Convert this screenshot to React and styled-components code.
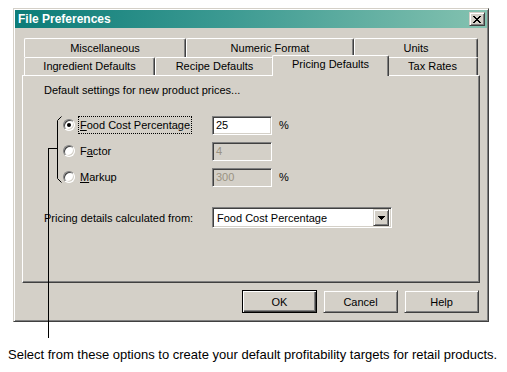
import React from 'react';
import styled, { createGlobalStyle, css } from 'styled-components';

const GlobalStyle = createGlobalStyle`
  body {
    margin: 0;
    background: #ffffff;
    font-family: "Liberation Sans", Arial, sans-serif;
    font-size: 11px;
    color: #000;
  }
`;

const face = '#d4d0c8';
const shadow = '#808080';
const darkShadow = '#404040';

// raised 3d edge, classic windows look
const raised = css`
  border: 1px solid;
  border-color: ${face} ${darkShadow} ${darkShadow} ${face};
  box-shadow: inset 1px 1px #ffffff, inset -1px -1px ${shadow};
`;

const sunken = css`
  border: 1px solid;
  border-color: ${shadow} #ffffff #ffffff ${shadow};
  box-shadow: inset 1px 1px ${darkShadow}, inset -1px -1px ${face};
`;

const Page = styled.div`
  position: relative;
  width: 507px;
  height: 372px;
  padding-top: 8px;
  box-sizing: border-box;
  overflow: hidden;
`;

const Window = styled.div`
  ${raised};
  margin-left: 13px;
  width: 476px;
  height: 314px;
  box-sizing: border-box;
  padding: 1px;
  background: ${face};
  display: flex;
  flex-direction: column;
`;

const TitleBar = styled.div`
  height: 18px;
  display: flex;
  align-items: center;
  justify-content: space-between;
  padding: 0 2px 0 3px;
  background: linear-gradient(to right, #0c7c78, #3c9a92 45%, #84c2b0);
`;

const Title = styled.span`
  color: #fff;
  font-weight: bold;
  font-size: 12px;
`;

const CloseButton = styled.div`
  ${raised};
  width: 16px;
  height: 14px;
  box-sizing: border-box;
  background: ${face};
  display: flex;
  align-items: center;
  justify-content: center;
`;

const Body = styled.div`
  padding: 10px 7px 0 7px;
  display: flex;
  flex-direction: column;
`;

const Tabs = styled.div`
  padding-left: 2px;
  position: relative;
  z-index: 1;
`;

const TabRow = styled.div`
  display: flex;
  height: ${p => p.$h}px;
  align-items: flex-end;
`;

const Tab = styled.div`
  flex: none;
  width: ${p => p.$w}px;
  height: ${p => p.$h}px;
  box-sizing: border-box;
  background: ${face};
  border-top: 1px solid #fff;
  border-left: 1px solid #fff;
  border-right: 1px solid ${darkShadow};
  border-radius: 2px 2px 0 0;
  box-shadow: inset -1px 0 ${shadow};
  display: flex;
  align-items: center;
  justify-content: center;
  padding-bottom: 1px;
  ${p => p.$active && css`
    width: ${p.$w + 4}px;
    margin: 0 -2px -1px;
    height: ${p.$h + 3}px;
    position: relative;
    z-index: 2;
    padding-bottom: 4px;
  `}
`;

const Panel = styled.div`
  border: 1px solid;
  border-color: #fff ${darkShadow} ${darkShadow} #fff;
  box-shadow: inset -1px -1px ${shadow};
  height: 208px;
  box-sizing: border-box;
  padding: 8px 0 0 21px;
`;

const Intro = styled.div`
  line-height: 13px;
`;

const OptionGrid = styled.div`
  margin-top: 15px;
  padding-left: 19px;
  display: grid;
  grid-template-columns: 149px 60px auto;
  grid-auto-rows: 26px;
  align-items: center;
  & > * { justify-self: start; }
`;

const RadioLabel = styled.label`
  display: flex;
  align-items: center;
  gap: 4px;
`;

const RadioCircle = styled.span`
  width: 12px;
  height: 12px;
  box-sizing: border-box;
  border-radius: 50%;
  border: 1px solid;
  border-color: ${shadow} #fff #fff ${shadow};
  box-shadow: inset 1px 1px ${darkShadow}, inset -1px -1px ${face};
  background: #fff;
  display: flex;
  align-items: center;
  justify-content: center;
  &::after {
    content: '';
    width: 4px;
    height: 4px;
    border-radius: 50%;
    background: ${p => (p.$checked ? '#000' : 'transparent')};
  }
`;

const LabelText = styled.span`
  padding: 1px 1px;
  line-height: 14px;
  outline: ${p => (p.$focus ? '1px dotted #000' : 'none')};
  outline-offset: 0;
  u { text-decoration: underline; }
`;

const TextField = styled.div`
  ${sunken};
  width: 60px;
  height: 19px;
  box-sizing: border-box;
  padding: 2px 3px;
  line-height: 13px;
  background: ${p => (p.$disabled ? face : '#fff')};
  color: ${p => (p.$disabled ? '#9a9282' : '#000')};
  font-size: 11px;
`;

const Unit = styled.span`
  margin-left: 7px;
`;

const SelectRow = styled.div`
  margin-top: 17px;
  display: flex;
  align-items: center;
`;

const SelectLabel = styled.span`
  width: 168px;
`;

const Select = styled.div`
  ${sunken};
  width: 180px;
  height: 21px;
  box-sizing: border-box;
  background: #fff;
  display: flex;
  align-items: center;
  padding: 2px 2px 2px 4px;
  font-size: 11px;
`;

const SelectValue = styled.span`
  flex: 1;
`;

const ArrowButton = styled.div`
  ${raised};
  width: 16px;
  height: 17px;
  box-sizing: border-box;
  background: ${face};
  display: flex;
  align-items: center;
  justify-content: center;
`;

const ButtonBar = styled.div`
  display: flex;
  justify-content: flex-end;
  gap: 6px;
  margin-top: 7px;
  padding-right: 1px;
`;

const Button = styled.div`
  ${raised};
  width: 75px;
  height: 23px;
  box-sizing: border-box;
  background: ${face};
  display: flex;
  align-items: center;
  justify-content: center;
  ${p => p.$default && css`
    border-color: #000;
    box-shadow: inset 1px 1px #fff, inset -1px -1px ${darkShadow}, inset -2px -2px ${shadow};
  `}
`;

const Caption = styled.div`
  margin-top: 25px;
  padding-left: 8px;
  font-size: 13px;
  line-height: 15px;
  white-space: nowrap;
`;

const Callout = styled.svg`
  position: absolute;
  left: 0;
  top: 0;
  pointer-events: none;
`;

const rowOne = [
  { label: 'Miscellaneous', w: 162 },
  { label: 'Numeric Format', w: 168 },
  { label: 'Units', w: 124 },
];

const rowTwo = [
  { label: 'Ingredient Defaults', w: 131 },
  { label: 'Recipe Defaults', w: 119 },
  { label: 'Pricing Defaults', w: 113, active: true },
  { label: 'Tax Rates', w: 91 },
];

const options = [
  { pre: '', key: 'F', post: 'ood Cost Percentage', value: '25', unit: '%', checked: true },
  { pre: 'F', key: 'a', post: 'ctor', value: '4', unit: '' },
  { pre: '', key: 'M', post: 'arkup', value: '300', unit: '%' },
];

export default function App() {
  return (
    <Page>
      <GlobalStyle />
      <Window>
        <TitleBar>
          <Title>File Preferences</Title>
          <CloseButton>
            <svg width="8" height="7" viewBox="0 0 8 7" shapeRendering="crispEdges">
              <path d="M0 0h2v1h-2zM6 0h2v1h-2zM1 1h2v1h-2zM5 1h2v1h-2zM2 2h4v1h-4zM3 3h2v1h-2zM2 4h4v1h-4zM1 5h2v1h-2zM5 5h2v1h-2zM0 6h2v1h-2zM6 6h2v1h-2z" fill="#000" />
            </svg>
          </CloseButton>
        </TitleBar>
        <Body>
          <Tabs>
            <TabRow $h={19}>
              {rowOne.map(t => (
                <Tab key={t.label} $w={t.w} $h={19}>{t.label}</Tab>
              ))}
            </TabRow>
            <TabRow $h={18}>
              {rowTwo.map(t => (
                <Tab key={t.label} $w={t.w} $h={18} $active={t.active}>{t.label}</Tab>
              ))}
            </TabRow>
          </Tabs>
          <Panel>
            <Intro>Default settings for new product prices...</Intro>
            <OptionGrid>
              {options.map(o => (
                <React.Fragment key={o.key}>
                  <RadioLabel>
                    <RadioCircle $checked={o.checked} />
                    <LabelText $focus={o.checked}>
                      {o.pre}<u>{o.key}</u>{o.post}
                    </LabelText>
                  </RadioLabel>
                  <TextField $disabled={!o.checked}>{o.value}</TextField>
                  <Unit>{o.unit}</Unit>
                </React.Fragment>
              ))}
            </OptionGrid>
            <SelectRow>
              <SelectLabel>Pricing details calculated from:</SelectLabel>
              <Select>
                <SelectValue>Food Cost Percentage</SelectValue>
                <ArrowButton>
                  <svg width="7" height="4" viewBox="0 0 7 4" shapeRendering="crispEdges">
                    <path d="M0 0h7v1h-7zM1 1h5v1h-5zM2 2h3v1h-3zM3 3h1v1h-1z" fill="#000" />
                  </svg>
                </ArrowButton>
              </Select>
            </SelectRow>
          </Panel>
          <ButtonBar>
            <Button $default>OK</Button>
            <Button>Cancel</Button>
            <Button>Help</Button>
          </ButtonBar>
        </Body>
      </Window>
      <Caption>Select from these options to create your default profitability targets for retail products.</Caption>
      <Callout width="507" height="372" viewBox="0 0 507 372">
        <path d="M61.5 116.5 L57.5 120.5 V178.5 L61.5 182.5" fill="none" stroke="#000" strokeWidth="1" />
        <path d="M48 148.5 H57.5 M48.5 148 V338" fill="none" stroke="#000" strokeWidth="1" shapeRendering="crispEdges" />
      </Callout>
    </Page>
  );
}
